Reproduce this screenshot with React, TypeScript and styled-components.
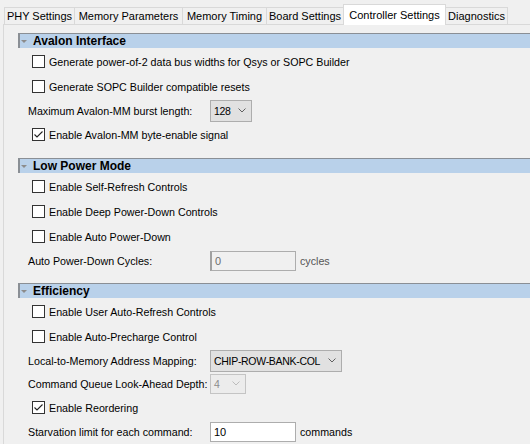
import React from "react";
import styled, { createGlobalStyle } from "styled-components";

const GlobalStyle = createGlobalStyle`
  html, body {
    margin: 0;
    padding: 0;
    background: #f0f0f0;
    overflow: hidden;
  }

  body {
    font-family: "Liberation Sans", Arial, sans-serif;
    font-size: 10.7px;
    color: #000;
  }
`;

const Root = styled.div`
  box-sizing: border-box;
  width: 100%;
  padding-left: 3px;
`;

const TabStrip = styled.div`
  display: flex;
  align-items: flex-end;
  height: 24px;
  padding-left: 1px;
  font-size: 11px;
`;

const Tab = styled.div<{ $w: number; $active?: boolean }>`
  position: relative;
  z-index: ${(p) => (p.$active ? 1 : 0)};
  box-sizing: border-box;
  width: ${(p) => p.$w}px;
  height: ${(p) => (p.$active ? 21 : 17)}px;
  margin-left: -1px;
  margin-bottom: ${(p) => (p.$active ? -1 : 0)}px;
  display: flex;
  align-items: center;
  justify-content: center;
  background: ${(p) => (p.$active ? "#ffffff" : "#f0f0f0")};
  border: 1px solid #d9d9d9;
  border-bottom: none;
  white-space: nowrap;

  &:first-child {
    margin-left: 0;
  }
`;

const Panel = styled.div`
  border-top: 1px solid #d9d9d9;
  border-left: 1px solid #d9d9d9;
  padding: 0 0 20px 14px;
`;

const Section = styled.section<{ $gap: number }>`
  margin-top: ${(p) => p.$gap}px;
`;

const SectionHeader = styled.div`
  box-sizing: border-box;
  height: 15px;
  display: flex;
  align-items: center;
  gap: 6px;
  background: #b9d1ea;
  border-top: 1px solid #8a8f95;
  border-left: 2px solid #8a8f95;
  padding-left: 1px;
  font-size: 12px;
  font-weight: 700;
`;

const Caret = styled.span`
  width: 0;
  height: 0;
  border-left: 3px solid transparent;
  border-right: 3px solid transparent;
  border-top: 3px solid #8c8c8c;
`;

const SectionBody = styled.div`
  padding-top: 1px;
`;

const CheckLine = styled.label`
  height: 25px;
  display: flex;
  align-items: center;
  padding-left: 14px;
  white-space: nowrap;
`;

const Box = styled.span`
  box-sizing: border-box;
  width: 13px;
  height: 13px;
  margin-right: 4px;
  border: 1px solid #333;
  background: #fff;
  display: flex;
  flex-shrink: 0;
`;

const FieldLine = styled.div`
  height: 23px;
  display: flex;
  align-items: center;
  padding-left: 10px;
  white-space: nowrap;
`;

const FieldLabel = styled.span`
  width: 182px;
  flex-shrink: 0;
`;

const Select = styled.div<{ $w: number; $disabled?: boolean }>`
  box-sizing: border-box;
  width: ${(p) => p.$w}px;
  height: ${(p) => (p.$disabled ? 20 : 22)}px;
  flex-shrink: 0;
  display: flex;
  align-items: center;
  justify-content: space-between;
  padding: 0 5px 0 3px;
  background: ${(p) => (p.$disabled ? "#ececec" : "#e1e1e1")};
  border: 1px solid ${(p) => (p.$disabled ? "#c4c4c4" : "#adadad")};
  color: ${(p) => (p.$disabled ? "#8d8d8d" : "#000")};
  font-size: 10.5px;
`;

const SelectText = styled.span`
  letter-spacing: -0.3px;
`;

const TextInput = styled.div<{ $disabled?: boolean }>`
  box-sizing: border-box;
  width: 86px;
  height: 20px;
  flex-shrink: 0;
  display: flex;
  align-items: center;
  padding-left: 3px;
  background: ${(p) => (p.$disabled ? "#f0f0f0" : "#fff")};
  border: 1px solid #adadad;
  border-left: ${(p) => (p.$disabled ? "2px solid #a0a0a0" : "1px solid #adadad")};
  color: ${(p) => (p.$disabled ? "#6d6d6d" : "#000")};
  font-size: 11px;
`;

const Unit = styled.span<{ $disabled?: boolean }>`
  margin-left: 4px;
  color: ${(p) => (p.$disabled ? "#555" : "#000")};
`;

const Chevron = ({ color = "#606060" }: { color?: string }) => (
  <svg width="8" height="5" viewBox="0 0 8 5">
    <polyline points="0.5,0.5 4,4 7.5,0.5" fill="none" stroke={color} strokeWidth="1" />
  </svg>
);

const Check = ({ checked, label }: { checked?: boolean; label: string }) => (
  <CheckLine>
    <Box>
      {checked && (
        <svg width="11" height="11" viewBox="0 0 11 11">
          <polyline points="1.5,5.5 4,8 9.5,2.5" fill="none" stroke="#222" strokeWidth="1.1" />
        </svg>
      )}
    </Box>
    {label}
  </CheckLine>
);

const Field = ({ label, children }: { label: string; children: React.ReactNode }) => (
  <FieldLine>
    <FieldLabel>{label}</FieldLabel>
    {children}
  </FieldLine>
);

const tabs = [
  { name: "PHY Settings", w: 71 },
  { name: "Memory Parameters", w: 109 },
  { name: "Memory Timing", w: 85 },
  { name: "Board Settings", w: 78 },
  { name: "Controller Settings", w: 103, active: true },
  { name: "Diagnostics", w: 63 },
];

export default function App() {
  return (
    <>
      <GlobalStyle />
      <Root>
        <TabStrip>
          {tabs.map((t) => (
            <Tab key={t.name} $w={t.w} $active={t.active}>
              {t.name}
            </Tab>
          ))}
        </TabStrip>

        <Panel>
          <Section $gap={8}>
            <SectionHeader>
              <Caret />
              Avalon Interface
            </SectionHeader>
            <SectionBody>
              <Check label="Generate power-of-2 data bus widths for Qsys or SOPC Builder" />
              <Check label="Generate SOPC Builder compatible resets" />
              <Field label="Maximum Avalon-MM burst length:">
                <Select $w={42}>
                  <SelectText>128</SelectText>
                  <Chevron />
                </Select>
              </Field>
              <Check checked label="Enable Avalon-MM byte-enable signal" />
            </SectionBody>
          </Section>

          <Section $gap={11}>
            <SectionHeader>
              <Caret />
              Low Power Mode
            </SectionHeader>
            <SectionBody>
              <Check label="Enable Self-Refresh Controls" />
              <Check label="Enable Deep Power-Down Controls" />
              <Check label="Enable Auto Power-Down" />
              <Field label="Auto Power-Down Cycles:">
                <TextInput $disabled>0</TextInput>
                <Unit $disabled>cycles</Unit>
              </Field>
            </SectionBody>
          </Section>

          <Section $gap={11}>
            <SectionHeader>
              <Caret />
              Efficiency
            </SectionHeader>
            <SectionBody>
              <Check label="Enable User Auto-Refresh Controls" />
              <Check label="Enable Auto-Precharge Control" />
              <Field label="Local-to-Memory Address Mapping:">
                <Select $w={132}>
                  <SelectText>CHIP-ROW-BANK-COL</SelectText>
                  <Chevron />
                </Select>
              </Field>
              <Field label="Command Queue Look-Ahead Depth:">
                <Select $w={36} $disabled>
                  <SelectText>4</SelectText>
                  <Chevron color="#bcbcbc" />
                </Select>
              </Field>
              <Check checked label="Enable Reordering" />
              <Field label="Starvation limit for each command:">
                <TextInput>10</TextInput>
                <Unit>commands</Unit>
              </Field>
            </SectionBody>
          </Section>
        </Panel>
      </Root>
    </>
  );
}
